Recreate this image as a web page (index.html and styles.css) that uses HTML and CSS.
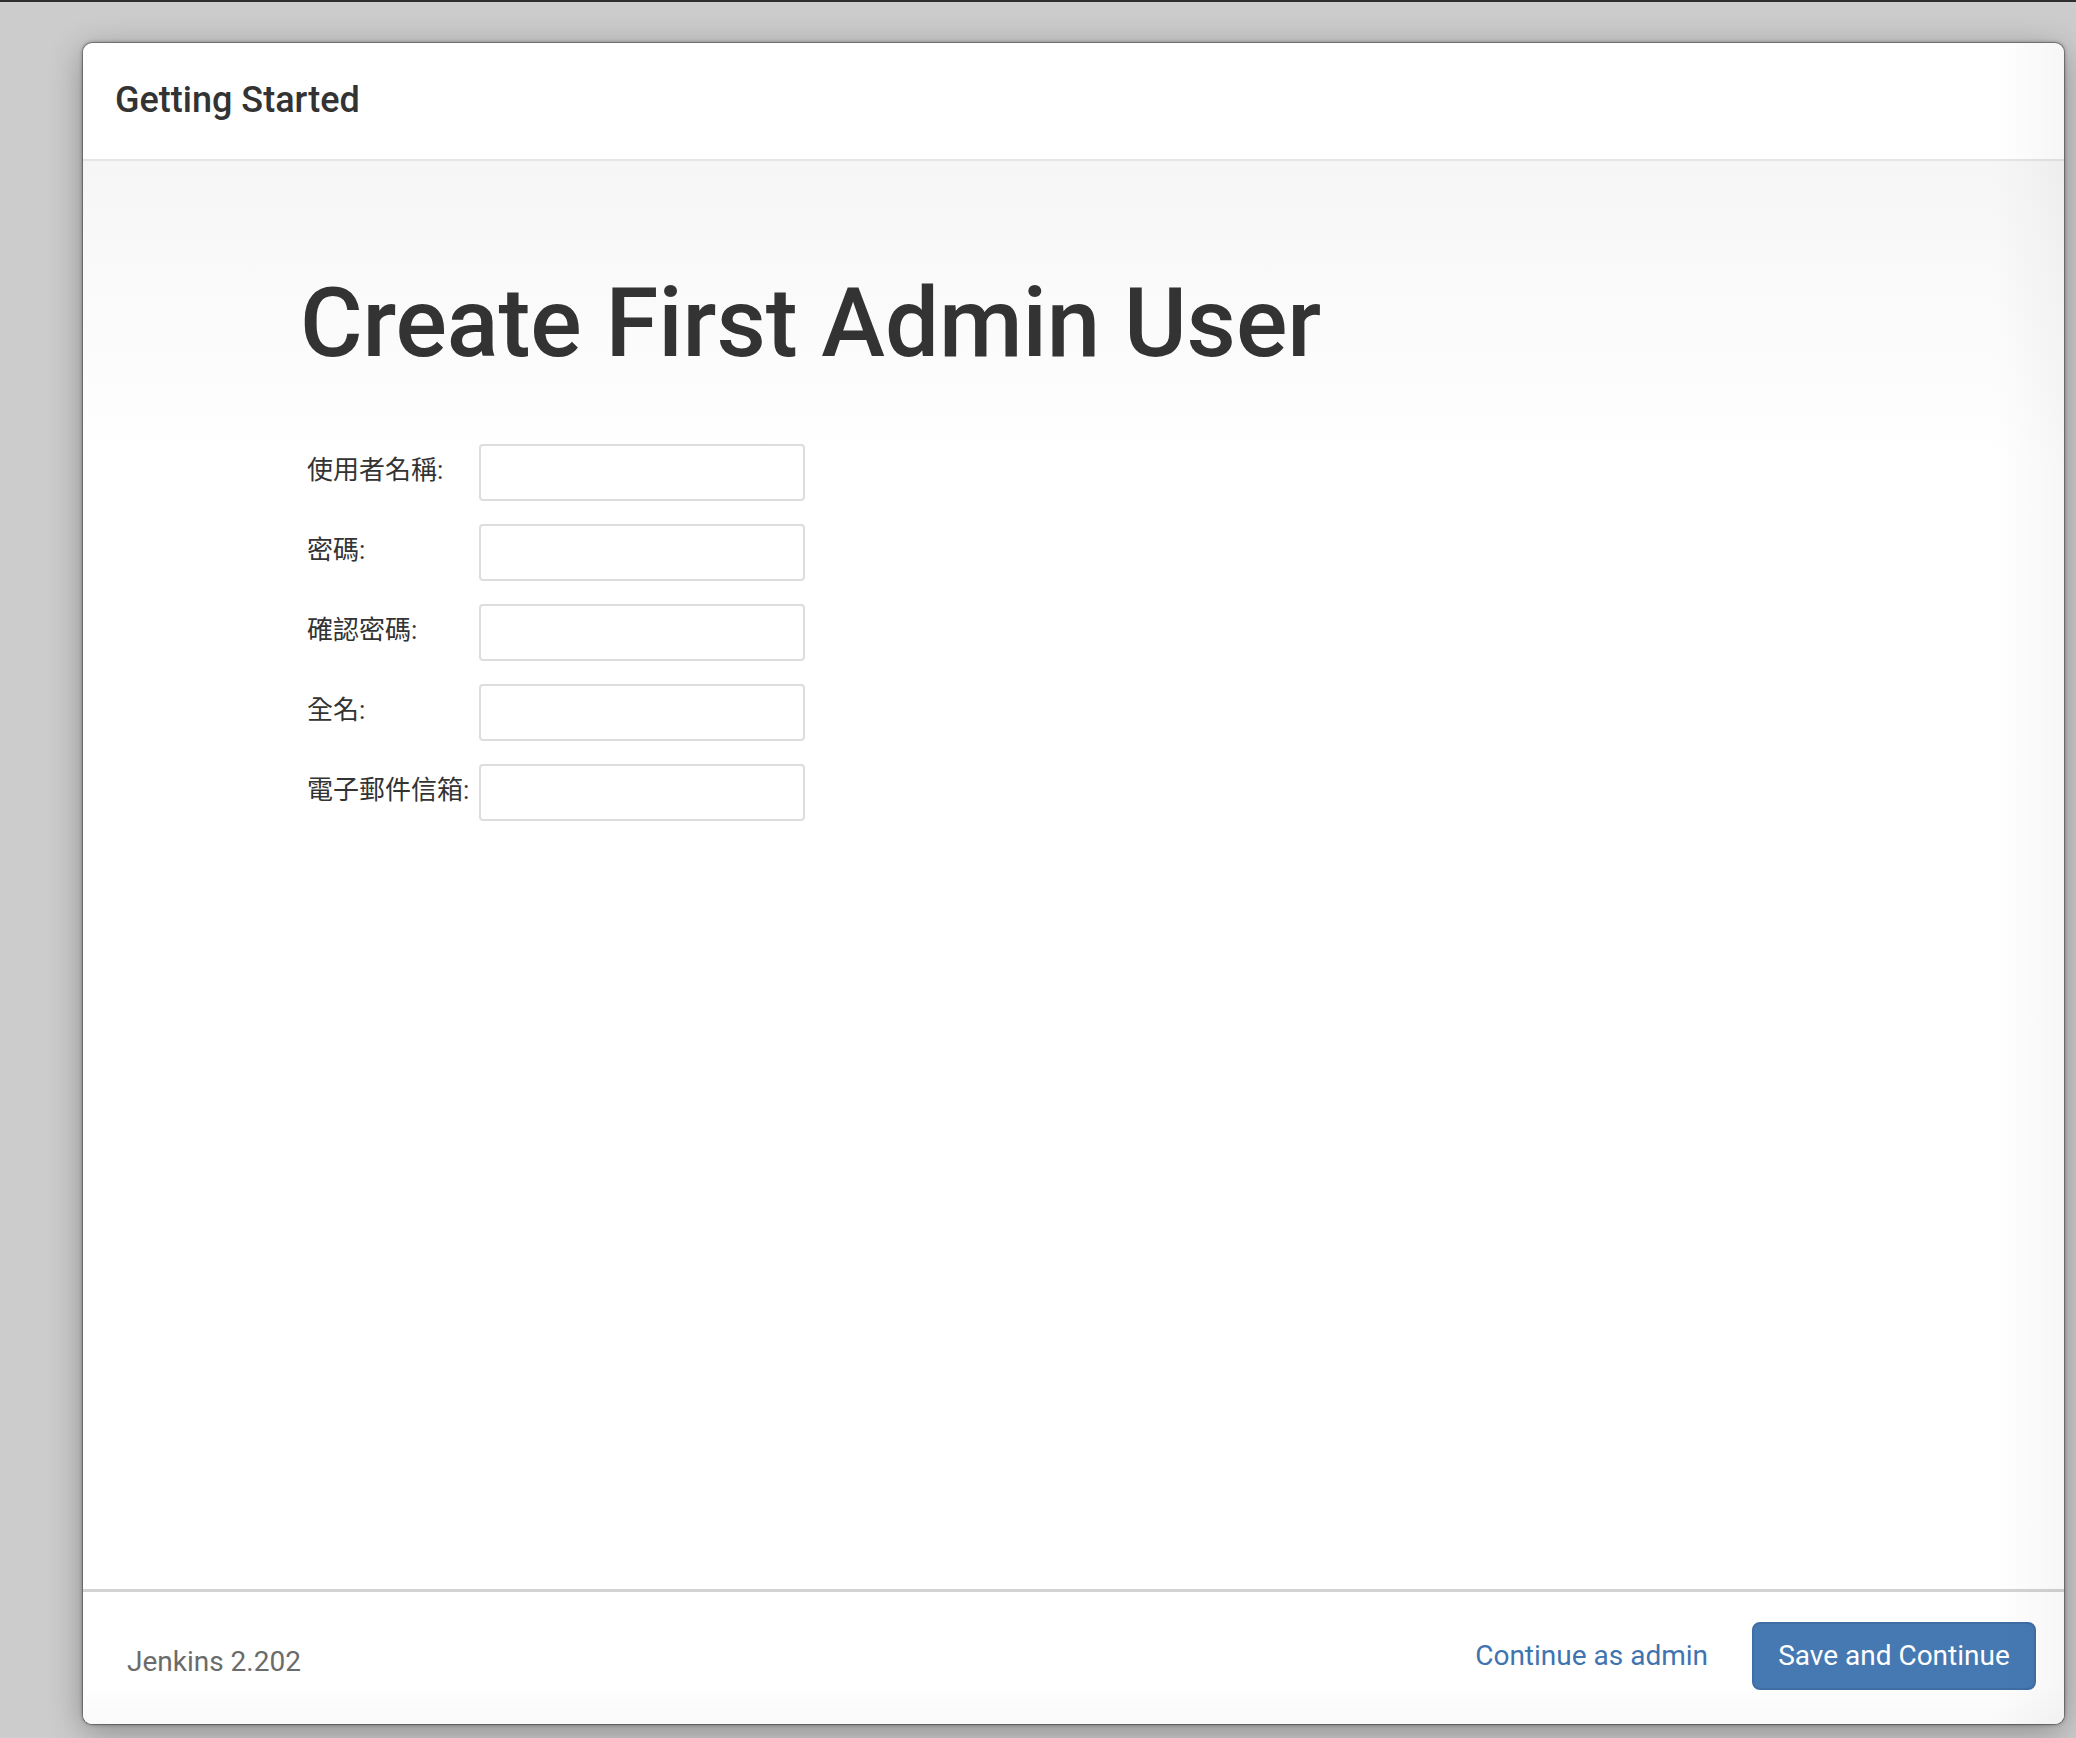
FILE: index.html
```html
<!DOCTYPE html>
<html lang="zh-Hant">
<head>
<meta charset="utf-8">
<title>Getting Started</title>
<link rel="stylesheet" href="styles.css">
</head>
<body>
<div class="dialog">
  <header class="dialog-header">
    <h4 class="dialog-title">Getting Started</h4>
  </header>
  <main class="dialog-body">
    <h1 class="page-title">Create First Admin User</h1>
    <form class="user-form">
      <label class="field-label" for="username">使用者名稱:</label>
      <input class="field-input" id="username" type="text">
      <label class="field-label" for="password1">密碼:</label>
      <input class="field-input" id="password1" type="password">
      <label class="field-label" for="password2">確認密碼:</label>
      <input class="field-input" id="password2" type="password">
      <label class="field-label" for="fullname">全名:</label>
      <input class="field-input" id="fullname" type="text">
      <label class="field-label" for="email">電子郵件信箱:</label>
      <input class="field-input" id="email" type="text">
    </form>
  </main>
  <footer class="dialog-footer">
    <div class="version">Jenkins 2.202</div>
    <div class="actions">
      <a class="link-btn" href="#">Continue as admin</a>
      <button class="primary-btn" type="button">Save and Continue</button>
    </div>
  </footer>
</div>
</body>
</html>
```

FILE: styles.css
```css
html, body {
  margin: 0;
  padding: 0;
}

body {
  width: 2076px;
  height: 1738px;
  box-sizing: border-box;
  background: #cccccc;
  border-top: 2px solid #2e2e2e;
  font-family: Roboto, "Noto Sans CJK TC", "Helvetica Neue", Arial, sans-serif;
  color: #333333;
  overflow: hidden;
  padding: 41px 12px 14px 83px;
}

.dialog {
  position: relative;
  width: 1981px;
  height: 1681px;
  background: #ffffff;
  border-radius: 9px;
  display: flex;
  flex-direction: column;
  box-shadow: 0 0 0 1px rgba(0, 0, 0, 0.25), 0 0 4px rgba(0, 0, 0, 0.45), 0 8px 34px rgba(0, 0, 0, 0.32);
  overflow: hidden;
}

.dialog::after {
  content: "";
  position: absolute;
  top: 0;
  right: 0;
  bottom: 0;
  width: 70px;
  background: linear-gradient(to left, rgba(0, 0, 0, 0.035), rgba(0, 0, 0, 0));
  pointer-events: none;
}

.dialog-header {
  height: 116px;
  border-bottom: 2px solid #e5e5e5;
  display: flex;
  align-items: center;
  padding: 0 32px;
  flex: none;
}

.dialog-title {
  margin: 0;
  font-size: 36px;
  font-weight: 500;
  color: #333333;
  line-height: 1.1;
}

.dialog-body {
  flex: 1;
  background: linear-gradient(#f6f6f6, #ffffff 300px);
  padding: 110px 0 0 217px;
}

.page-title {
  margin: 0;
  font-size: 96px;
  font-weight: 500;
  line-height: 1.1;
  color: #333333;
  letter-spacing: -0.1px;
}

.user-form {
  margin-top: 67px;
  display: grid;
  grid-template-columns: 179px 326px;
  row-gap: 23px;
  align-items: center;
}

.field-label {
  font-size: 26px;
  color: #333333;
  padding-left: 7px;
  padding-bottom: 9px;
  white-space: nowrap;
}

.field-input {
  box-sizing: border-box;
  width: 326px;
  height: 57px;
  border: 2px solid #dddddd;
  border-radius: 4px;
  background: #ffffff;
  margin: 0;
  padding: 0 12px;
  font-size: 26px;
}

.dialog-footer {
  flex: none;
  border-top: 3px solid #d3d3d3;
  box-sizing: border-box;
  height: 135px;
  display: flex;
  align-items: center;
  justify-content: space-between;
  padding: 0 28px 0 44px;
  background: linear-gradient(#ffffff 70%, #f9f9f9);
}

.version {
  font-size: 28px;
  color: #6b6b6b;
  padding-top: 6px;
}

.actions {
  display: flex;
  align-items: center;
  gap: 44px;
  padding-bottom: 5px;
}

.link-btn {
  font-size: 28px;
  color: #3f74b0;
  text-decoration: none;
}

.primary-btn {
  box-sizing: border-box;
  width: 284px;
  height: 68px;
  background: #4679b2;
  border: 2px solid #3f6ea5;
  border-radius: 8px;
  color: #ffffff;
  font-family: Roboto, "Noto Sans CJK TC", Arial, sans-serif;
  font-size: 28px;
  padding: 0;
}
```
